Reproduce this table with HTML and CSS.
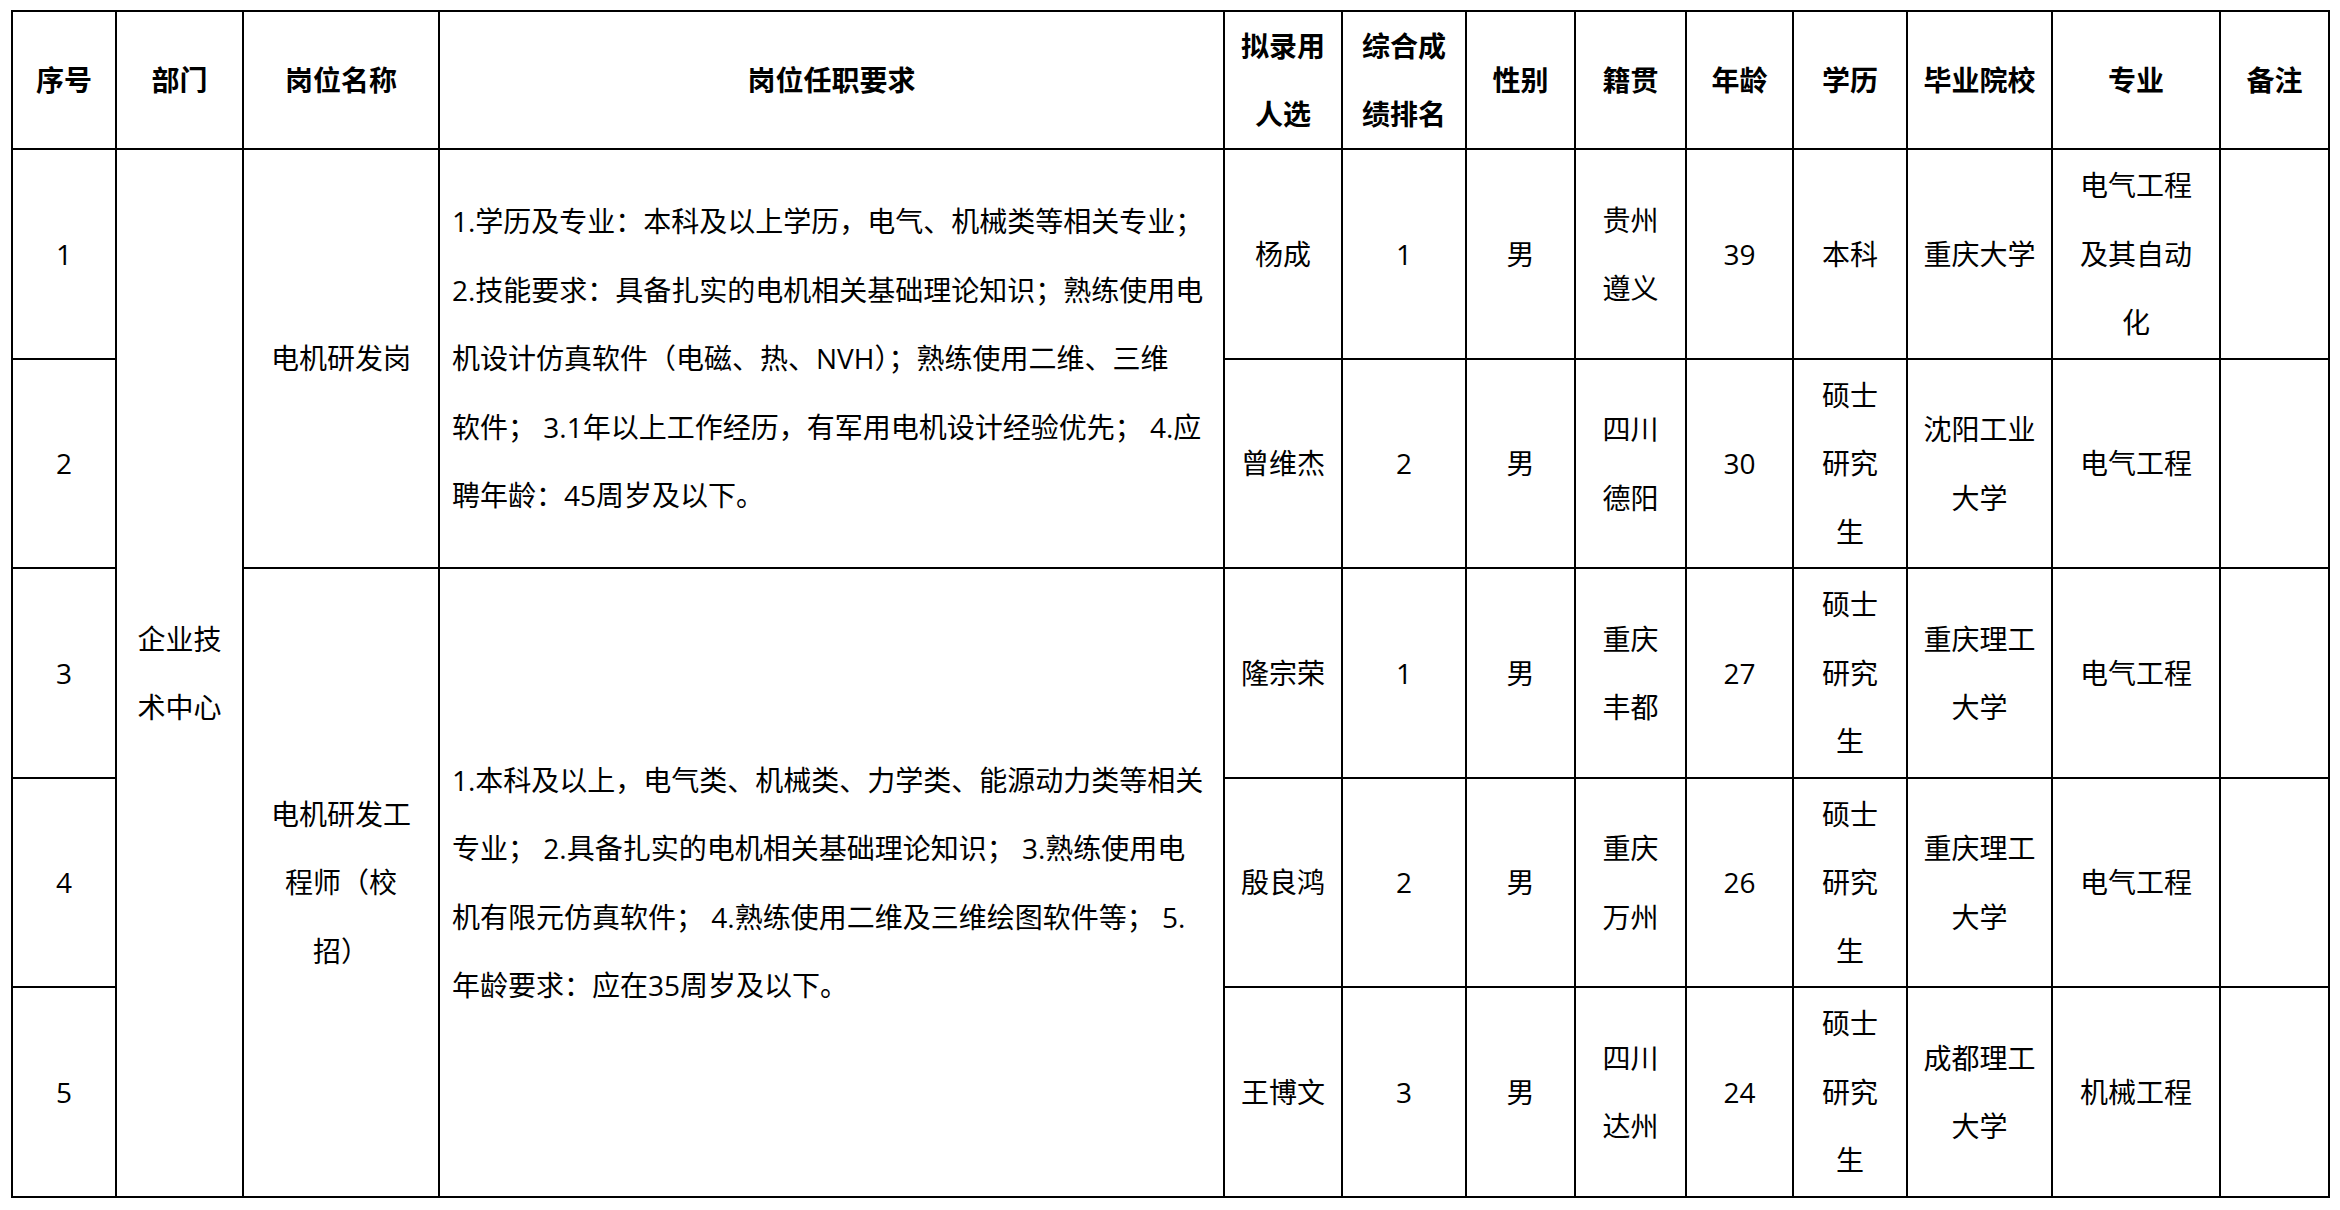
FILE: index.html
```html
<!DOCTYPE html>
<html lang="zh-CN">
<head>
<meta charset="utf-8">
<title>拟录用人选公示</title>
<link rel="stylesheet" href="styles.css">
</head>
<body>
<div class="sheet">
  <div class="cell th">序号</div>
  <div class="cell th">部门</div>
  <div class="cell th">岗位名称</div>
  <div class="cell th">岗位任职要求</div>
  <div class="cell th">拟录用<br>人选</div>
  <div class="cell th">综合成<br>绩排名</div>
  <div class="cell th">性别</div>
  <div class="cell th">籍贯</div>
  <div class="cell th">年龄</div>
  <div class="cell th">学历</div>
  <div class="cell th">毕业院校</div>
  <div class="cell th">专业</div>
  <div class="cell th">备注</div>

  <div class="cell">1</div>
  <div class="cell span5">企业技<br>术中心</div>
  <div class="cell span2">电机研发岗</div>
  <div class="cell req span2">1.学历及专业：本科及以上学历，电气、机械类等相关专业；<br>2.技能要求：具备扎实的电机相关基础理论知识；熟练使用电<br>机设计仿真软件（电磁、热、NVH）；熟练使用二维、三维<br>软件； 3.1年以上工作经历，有军用电机设计经验优先； 4.应<br>聘年龄：45周岁及以下。</div>
  <div class="cell">杨成</div>
  <div class="cell">1</div>
  <div class="cell">男</div>
  <div class="cell">贵州<br>遵义</div>
  <div class="cell">39</div>
  <div class="cell">本科</div>
  <div class="cell">重庆大学</div>
  <div class="cell">电气工程<br>及其自动<br>化</div>
  <div class="cell"></div>

  <div class="cell">2</div>
  <div class="cell">曾维杰</div>
  <div class="cell">2</div>
  <div class="cell">男</div>
  <div class="cell">四川<br>德阳</div>
  <div class="cell">30</div>
  <div class="cell">硕士<br>研究<br>生</div>
  <div class="cell">沈阳工业<br>大学</div>
  <div class="cell">电气工程</div>
  <div class="cell"></div>

  <div class="cell">3</div>
  <div class="cell span3">电机研发工<br>程师（校<br>招）</div>
  <div class="cell req span3">1.本科及以上，电气类、机械类、力学类、能源动力类等相关<br>专业； 2.具备扎实的电机相关基础理论知识； 3.熟练使用电<br>机有限元仿真软件； 4.熟练使用二维及三维绘图软件等； 5.<br>年龄要求：应在35周岁及以下。</div>
  <div class="cell">隆宗荣</div>
  <div class="cell">1</div>
  <div class="cell">男</div>
  <div class="cell">重庆<br>丰都</div>
  <div class="cell">27</div>
  <div class="cell">硕士<br>研究<br>生</div>
  <div class="cell">重庆理工<br>大学</div>
  <div class="cell">电气工程</div>
  <div class="cell"></div>

  <div class="cell">4</div>
  <div class="cell">殷良鸿</div>
  <div class="cell">2</div>
  <div class="cell">男</div>
  <div class="cell">重庆<br>万州</div>
  <div class="cell">26</div>
  <div class="cell">硕士<br>研究<br>生</div>
  <div class="cell">重庆理工<br>大学</div>
  <div class="cell">电气工程</div>
  <div class="cell"></div>

  <div class="cell">5</div>
  <div class="cell">王博文</div>
  <div class="cell">3</div>
  <div class="cell">男</div>
  <div class="cell">四川<br>达州</div>
  <div class="cell">24</div>
  <div class="cell">硕士<br>研究<br>生</div>
  <div class="cell">成都理工<br>大学</div>
  <div class="cell">机械工程</div>
  <div class="cell"></div>
</div>
</body>
</html>
```

FILE: styles.css
```css
html, body {
  margin: 0;
  padding: 0;
  background: #ffffff;
}

body {
  font-family: "Open Sans", "Noto Sans CJK SC", sans-serif;
  color: #000000;
}

.sheet {
  display: grid;
  grid-template-columns: 104px 127px 196px 785px 118px 124px 109px 111px 107px 114px 145px 168px 109px;
  grid-template-rows: 138px 210px 209px 210px 209px 210px;
  width: max-content;
  margin: 10px 0 0 11px;
  border-top: 2px solid #000;
  border-left: 2px solid #000;
}

.cell {
  box-sizing: border-box;
  display: flex;
  align-items: center;
  justify-content: center;
  text-align: center;
  border-right: 2px solid #000;
  border-bottom: 2px solid #000;
  font-size: 28px;
  line-height: 68.5px;
  white-space: nowrap;
}

.th {
  font-weight: 700;
}

.req {
  justify-content: flex-start;
  text-align: left;
  padding-left: 12px;
}

.span2 { grid-row: span 2; }
.span3 { grid-row: span 3; }
.span5 { grid-row: span 5; }
```
